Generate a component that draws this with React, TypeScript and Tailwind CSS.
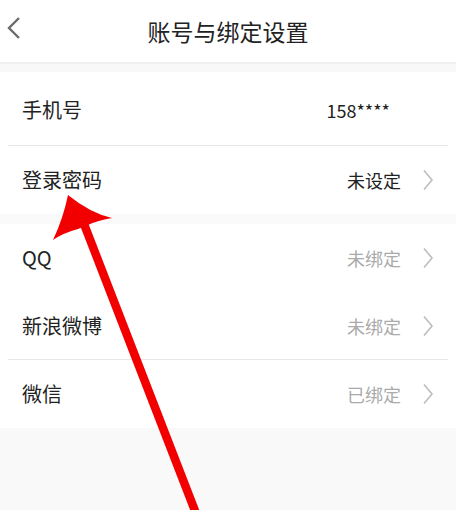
import React from "react";

const font = { fontFamily: '"Noto Sans CJK SC", "Noto Sans", sans-serif' };

function Chevron() {
  return (
    <svg width="12" height="22" viewBox="0 0 12 22" className="ml-[21px] shrink-0">
      <polyline points="2,1.5 10,11 2,20.5" fill="none" stroke="#bdbdbd" strokeWidth="1.6" strokeLinejoin="miter" />
    </svg>
  );
}

function Row({
  label,
  value,
  valueClass,
  h,
  chevron = true,
}: {
  label: string;
  value: string;
  valueClass: string;
  h: string;
  chevron?: boolean;
}) {
  return (
    <div className={`flex items-center bg-white pl-[22px] ${chevron ? "pr-[22px]" : "pr-[66px]"} ${h}`}>
      <span className="text-[20px] leading-none text-[#222]">{label}</span>
      <span className={`ml-auto text-[18px] leading-none ${valueClass}`}>{value}</span>
      {chevron && <Chevron />}
    </div>
  );
}

export default function App() {
  return (
    <div className="relative w-[456px] h-[510px] overflow-hidden bg-[#f9f9f9]" style={font}>
      <div className="relative flex h-[62px] items-center justify-center bg-white">
        <svg width="24" height="24" viewBox="0 0 24 24" className="absolute left-[3px] top-[16px]">
          <polyline points="16,2 6,12 16,22" fill="none" stroke="#6b6b6b" strokeWidth="2.4" />
        </svg>
        <span className="text-[23px] leading-none text-[#222]">账号与绑定设置</span>
      </div>
      <div className="h-[2px] bg-[#efefef]" />
      <div className="h-[8px] bg-[#f8f8f8]" />
      <div className="bg-white">
        <Row label="手机号" value="158****" valueClass="text-[#222]" h="h-[73px] pt-[3px]" chevron={false} />
        <div className="mx-[8px] h-px bg-[#e6e6e6]" />
        <Row label="登录密码" value="未设定" valueClass="text-[#222]" h="h-[68px]" />
      </div>
      <div className="h-[10px] bg-[#fafafa]" />
      <div className="bg-white">
        <Row label="QQ" value="未绑定" valueClass="text-[#aaaaaa]" h="h-[68px]" />
        <Row label="新浪微博" value="未绑定" valueClass="text-[#aaaaaa]" h="h-[67px]" />
        <div className="mx-[8px] h-px bg-[#e6e6e6]" />
        <Row label="微信" value="已绑定" valueClass="text-[#aaaaaa]" h="h-[68px]" />
      </div>

      <svg
        width="456"
        height="510"
        viewBox="0 0 456 510"
        className="pointer-events-none absolute left-0 top-0"
      >
        <line x1="84" y1="224" x2="197" y2="516" stroke="#f20000" strokeWidth="8.5" />
        <path
          d="M68 195 Q90 213 112 218 Q96 221 88 225 L78 229 Q63 233 53 240 Q63 219 68 195 Z"
          fill="#f20000"
        />
      </svg>
    </div>
  );
}
